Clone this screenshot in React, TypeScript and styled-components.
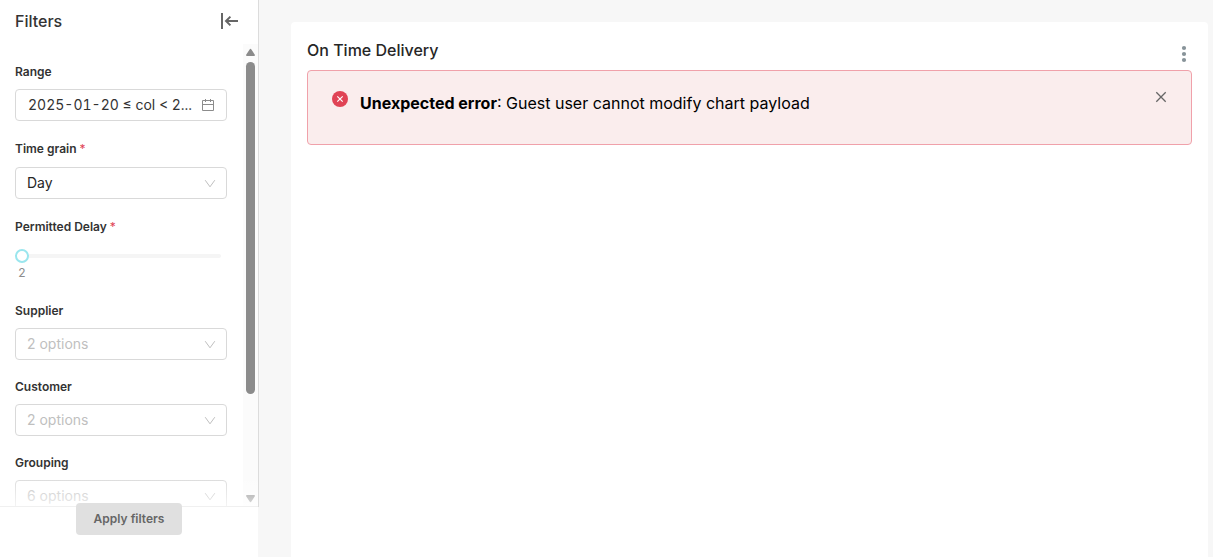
import React from "react";
import styled, { createGlobalStyle } from "styled-components";

const GlobalStyle = createGlobalStyle`
  * { box-sizing: border-box; }
  body {
    margin: 0;
    background: #f7f7f7;
    color: #333;
    font-family: Inter, "Liberation Sans", sans-serif;
    font-size: 14px;
  }
  button, select, input { font: inherit; color: inherit; margin: 0; }
`;

const Page = styled.div`
  display: flex;
  height: 100vh;
`;

const Sidebar = styled.aside`
  display: flex;
  flex-direction: column;
  flex: 0 0 259px;
`;

const Panel = styled.div`
  display: flex;
  flex-direction: column;
  flex: 1;
  min-height: 0;
  background: #fff;
  border-right: 1px solid #dcdcdc;
`;

const PanelHeader = styled.header`
  display: flex;
  align-items: center;
  justify-content: space-between;
  flex: 0 0 44px;
  padding: 0 20px 2px 15px;
`;

const PanelTitle = styled.h2`
  margin: 0;
  font-size: 16px;
  line-height: 20px;
  font-weight: 550;
`;

const IconButton = styled.button`
  display: flex;
  padding: 0;
  border: 0;
  background: none;
  cursor: pointer;
`;

const PanelBody = styled.div`
  position: relative;
  display: flex;
  flex: 1;
  min-height: 0;
`;

const Fields = styled.form`
  display: flex;
  flex-direction: column;
  gap: 17px;
  flex: 1;
  padding: 18px 16px 0 15px;
  overflow: hidden;
`;

const Field = styled.div`
  display: flex;
  flex-direction: column;
  flex: none;
  gap: 7px;
`;

const Label = styled.label<{ $required?: boolean }>`
  font-size: 12px;
  font-weight: 600;
  line-height: ${(p) => (p.$required ? 22 : 20)}px;
`;

const Star = styled.span`
  margin-left: 3px;
  color: #e04355;
  font-weight: 400;
`;

const RangeButton = styled.button`
  display: flex;
  align-items: center;
  justify-content: space-between;
  height: 32px;
  padding: 0 12px;
  border: 1px solid #d9d9d9;
  border-radius: 4px;
  background: #fff;
  white-space: nowrap;
  font-variant-numeric: tabular-nums;
`;

const RangeText = styled.span`
  padding-bottom: 2px;
`;

const SelectBox = styled.div`
  position: relative;
  display: flex;
`;

const Select = styled.select<{ $placeholder?: boolean }>`
  appearance: none;
  width: 100%;
  height: 32px;
  padding: 0 32px 2px 11px;
  border: 1px solid #d9d9d9;
  border-radius: 4px;
  background: #fff;
  color: ${(p) => (p.$placeholder ? "#bfbfbf" : "#262626")};
`;

const Arrow = styled.svg`
  position: absolute;
  right: 11px;
  top: 11px;
  pointer-events: none;
`;

const SliderBox = styled.div`
  height: 39px;
  padding: 4px 6px 0 0;
`;

const Slider = styled.input`
  appearance: none;
  display: block;
  width: 100%;
  height: 14px;
  background: none;
  &::-webkit-slider-runnable-track {
    height: 4px;
    border-radius: 2px;
    background: #f5f5f5;
  }
  &::-webkit-slider-thumb {
    appearance: none;
    width: 14px;
    height: 14px;
    margin-top: -5px;
    border: 2px solid #9ae6ee;
    border-radius: 50%;
    background: #fff;
  }
`;

const SliderMark = styled.output`
  display: block;
  width: 14px;
  text-align: center;
  font-size: 12px;
  line-height: 20px;
  color: #8c8c8c;
`;

const Fade = styled.div`
  position: absolute;
  inset: auto 0 0;
  height: 32px;
  background: linear-gradient(rgba(255, 255, 255, 0), rgba(255, 255, 255, 0.7));
  border-bottom: 1px solid #f0f0f0;
  pointer-events: none;
`;

const ScrollBar = styled.div`
  display: flex;
  flex-direction: column;
  align-items: center;
  flex: 0 0 15px;
  padding: 4px 0;
  background: #fbfbfb;
`;

const Thumb = styled.div`
  width: 9px;
  flex: 0 1 73%;
  margin: 6px 0 auto;
  border-radius: 5px;
  background: #8b8b8b;
`;

const Footer = styled.footer`
  display: flex;
  align-items: flex-start;
  justify-content: center;
  flex: 0 0 50px;
  margin-right: 1px;
  background: #fff;
`;

const ApplyButton = styled.button`
  position: relative;
  height: 32px;
  margin-top: -4px;
  padding: 0 18px 2px;
  border: 0;
  border-radius: 4px;
  background: #e0e0e0;
  color: #666;
  font-size: 12px;
  font-weight: 600;
`;

const Main = styled.main`
  display: flex;
  flex: 1;
  min-width: 0;
  padding: 22px 5px 0 32px;
`;

const Card = styled.section`
  flex: 1;
  min-width: 0;
  padding: 16px 16px 0;
  border-radius: 4px 4px 0 0;
  background: #fff;
`;

const CardHeader = styled.header`
  display: flex;
  justify-content: space-between;
  height: 32px;
`;

const CardTitle = styled.h1`
  margin: 0;
  font-size: 16px;
  line-height: 24px;
  font-weight: 550;
  color: #262626;
`;

const MenuButton = styled(IconButton)`
  padding: 7px 4px 0;
`;

const Alert = styled.div`
  display: flex;
  align-items: flex-start;
  min-height: 75px;
  padding: 20px 24px;
  border: 1px solid #f0a1aa;
  border-radius: 4px;
  background: #faeded;
  color: #000;
`;

const Message = styled.p`
  flex: 1;
  margin: 0 12px;
  font-size: 16px;
  line-height: 24px;
`;

function Dropdown({ id, label, value, required }: { id: string; label: string; value: string; required?: boolean }) {
  return (
    <Field>
      <Label htmlFor={id} $required={required}>
        {label}
        {required && <Star>*</Star>}
      </Label>
      <SelectBox>
        <Select id={id} $placeholder={!required}>
          <option>{value}</option>
        </Select>
        <Arrow width="12" height="12" viewBox="0 0 12 12" fill="none" stroke="#bfbfbf">
          <path d="M1.2 2.2 6 8.8l4.8-6.6" />
        </Arrow>
      </SelectBox>
    </Field>
  );
}

export default function App() {
  return (
    <>
      <GlobalStyle />
      <Page>
        <Sidebar>
          <Panel>
            <PanelHeader>
              <PanelTitle>Filters</PanelTitle>
              <IconButton aria-label="Collapse filters">
                <svg width="18" height="16" viewBox="0 0 18 16" fill="none" stroke="#666" strokeWidth="2">
                  <path d="M2 0v16" />
                  <path d="M18 8H6.5M10.4 3.6 6 8l4.4 4.4" />
                </svg>
              </IconButton>
            </PanelHeader>
            <PanelBody>
              <Fields>
                <Field>
                  <Label htmlFor="range">Range</Label>
                  <RangeButton id="range" type="button">
                    <RangeText>2025-01-20 ≤ col &lt; 2...</RangeText>
                    <svg width="12" height="12" viewBox="0 0 12 12" fill="none" stroke="#8c8c8c">
                      <path d="M.5 1.5h11v10H.5zM.5 5.5h11M3.5 0v3M8.5 0v3" />
                    </svg>
                  </RangeButton>
                </Field>
                <Dropdown id="grain" label="Time grain" value="Day" required />
                <Field>
                  <Label htmlFor="delay" $required>
                    Permitted Delay<Star>*</Star>
                  </Label>
                  <SliderBox>
                    <Slider id="delay" type="range" min={2} max={30} defaultValue={2} />
                    <SliderMark htmlFor="delay">2</SliderMark>
                  </SliderBox>
                </Field>
                <Dropdown id="supplier" label="Supplier" value="2 options" />
                <Dropdown id="customer" label="Customer" value="2 options" />
                <Dropdown id="grouping" label="Grouping" value="6 options" />
              </Fields>
              <ScrollBar aria-hidden="true">
                <svg width="9" height="8" viewBox="0 0 9 8" fill="#8b8b8b">
                  <path d="M0 7Q0 8 1 8H8Q9 8 9 7L5.4 1.4Q4.5 0 3.6 1.4z" />
                </svg>
                <Thumb />
                <svg width="9" height="8" viewBox="0 0 9 8" fill="#8b8b8b">
                  <path d="M0 1Q0 0 1 0H8Q9 0 9 1L5.4 6.6Q4.5 8 3.6 6.6z" />
                </svg>
              </ScrollBar>
              <Fade />
            </PanelBody>
          </Panel>
          <Footer>
            <ApplyButton type="button">Apply filters</ApplyButton>
          </Footer>
        </Sidebar>
        <Main>
          <Card>
            <CardHeader>
              <CardTitle>On Time Delivery</CardTitle>
              <MenuButton aria-label="Chart options">
                <svg width="8" height="18" viewBox="0 0 8 18" fill="#879399">
                  <circle cx="4" cy="3" r="2.1" />
                  <circle cx="4" cy="9" r="2.1" />
                  <circle cx="4" cy="15" r="2.1" />
                </svg>
              </MenuButton>
            </CardHeader>
            <Alert role="alert">
              <svg width="16" height="16" viewBox="0 0 16 16">
                <circle cx="8" cy="8" r="8" fill="#e04355" />
                <path d="m5.3 5.3 5.4 5.4m0-5.4-5.4 5.4" stroke="#fff" strokeWidth="1.2" />
              </svg>
              <Message>
                <strong>Unexpected error</strong>: Guest user cannot modify chart payload
              </Message>
              <IconButton aria-label="Close">
                <svg width="12" height="12" viewBox="0 0 12 12" stroke="#666" strokeWidth="1.3">
                  <path d="m1.3 1.3 9.4 9.4m0-9.4-9.4 9.4" />
                </svg>
              </IconButton>
            </Alert>
          </Card>
        </Main>
      </Page>
    </>
  );
}
